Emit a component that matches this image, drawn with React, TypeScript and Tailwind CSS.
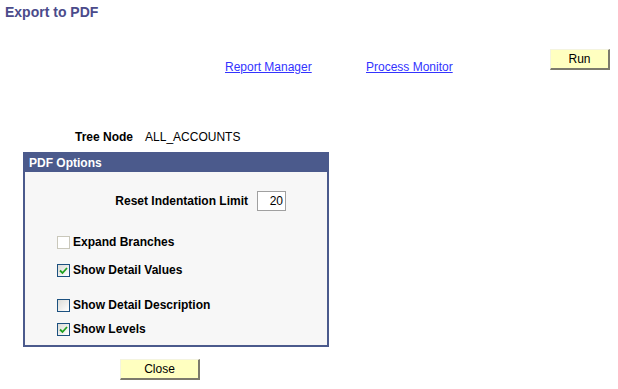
import React from "react";

const options = [
  { label: "Expand Branches", checked: false, disabled: true, mt: "mt-[24px]" },
  { label: "Show Detail Values", checked: true, disabled: false, mt: "mt-[14px]" },
  { label: "Show Detail Description", checked: false, disabled: false, mt: "mt-[21px]" },
  { label: "Show Levels", checked: true, disabled: false, mt: "mt-[10px]" },
];

function Checkbox({ checked, disabled }: { checked: boolean; disabled: boolean }) {
  return (
    <div
      className={`w-[13px] h-[13px] border flex items-center justify-center ${
        disabled
          ? "border-[#cac8bb] bg-white"
          : "border-[#1c5180] bg-gradient-to-br from-[#dcdcd7] to-white"
      }`}
    >
      {checked && (
        <svg width="9" height="9" viewBox="0 0 9 9">
          <path d="M1 4.5 L3.5 7 L8 2" fill="none" stroke="#21a121" strokeWidth="1.8" />
        </svg>
      )}
    </div>
  );
}

function PsButton({ label, width }: { label: string; width: string }) {
  return (
    <button
      className={`${width} h-[21px] bg-[#ffffc0] border border-t-[#f4f4e0] border-l-[#f4f4e0] border-r-[#7c7a6c] border-b-[#7c7a6c] border-r-2 border-b-2 text-[12px] leading-none text-black`}
    >
      {label}
    </button>
  );
}

export default function App() {
  return (
    <div className="w-[618px] h-[389px] bg-white text-black font-['Liberation_Sans',Arial,sans-serif] text-[12px]">
      <h1 className="pl-[5px] pt-[3px] text-[14px] leading-[18px] font-bold text-[#4b4b8b]">Export to PDF</h1>

      <div className="flex items-start mt-[28px]">
        <div className="ml-[225px] mt-[11px] w-[88px] leading-[14px]">
          <a href="#" className="underline text-[#3333ff]">Report Manager</a>
        </div>
        <div className="ml-[53px] mt-[11px] w-[89px] leading-[14px]">
          <a href="#" className="underline text-[#3333ff]">Process Monitor</a>
        </div>
        <div className="ml-[95px]">
          <PsButton label="Run" width="w-[60px]" />
        </div>
      </div>

      <div className="flex mt-[56px] leading-[14px]">
        <span className="ml-[75px] font-bold">Tree Node</span>
        <span className="ml-[12px]">ALL_ACCOUNTS</span>
      </div>

      <div className="ml-[23px] mt-[8px] w-[306px] h-[195px] border-2 border-[#4b5a8c] bg-[#f7f7f7] flex flex-col">
        <div className="h-[18px] bg-[#4b5a8c] text-white font-bold pl-[4px] leading-[18px]">PDF Options</div>
        <div className="flex items-center justify-end mt-[19px] pr-[41px]">
          <span className="font-bold mr-[9px]">Reset Indentation Limit</span>
          <div className="w-[29px] h-[20px] border border-[#a0a0a0] bg-white text-right pr-[2px] leading-[18px]">20</div>
        </div>
        <div className="flex flex-col pl-[32px]">
          {options.map((o) => (
            <div key={o.label} className={`flex items-center ${o.mt}`}>
              <Checkbox checked={o.checked} disabled={o.disabled} />
              <span className="ml-[3px] font-bold leading-[14px]">{o.label}</span>
            </div>
          ))}
        </div>
      </div>

      <div className="ml-[120px] mt-[12px]">
        <PsButton label="Close" width="w-[80px]" />
      </div>
    </div>
  );
}
